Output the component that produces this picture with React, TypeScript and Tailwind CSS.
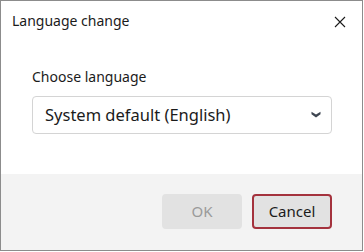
import React from "react";

export default function App() {
  return (
    <div className="w-[364px] h-[252px] bg-white">
      <div
        className="w-[363px] h-[251px] border border-[#8c8c8c] bg-white flex flex-col text-[#1b1b1b]"
        style={{ fontFamily: '"Noto Sans", "Open Sans", sans-serif' }}
      >
        <div className="h-[40px] flex items-center justify-between pl-[11px] pr-[16px]">
          <span className="text-[14px] leading-none -mt-[1px]">Language change</span>
          <svg width="12" height="12" viewBox="0 0 12 12" className="mt-[1px]">
            <path d="M1 1 L11 11 M11 1 L1 11" stroke="#1b1b1b" strokeWidth="1.1" fill="none" />
          </svg>
        </div>
        <div className="flex-1 px-[31px] pt-[26px]">
          <div className="text-[14px] leading-[20px] mb-[9px]">Choose language</div>
          <div className="h-[38px] w-[300px] border border-[#d4d4d4] rounded-[4px] flex items-center justify-between pl-[12px] pr-[10px]">
            <span className="text-[16.5px] leading-none">System default (English)</span>
            <svg width="10" height="7" viewBox="0 0 10 7" className="-mt-[1px]">
              <path d="M0.5 0.8 L5 3.6 L9.5 0.8 L9.5 3.2 L5 6.4 L0.5 3.2 Z" fill="#3d4550" />
            </svg>
          </div>
        </div>
        <div className="h-[76px] bg-[#f3f3f3] flex items-start justify-end gap-[10px] pt-[20px] pr-[30px]">
          <button className="w-[80px] h-[35px] rounded-[4px] bg-[#e2e2e2] text-[#9a9a9a] text-[15px]">OK</button>
          <button className="w-[80px] h-[35px] rounded-[4px] bg-[#e2e2e2] border-2 border-[#a4323d] text-[#1b1b1b] text-[15px]">Cancel</button>
        </div>
      </div>
    </div>
  );
}
